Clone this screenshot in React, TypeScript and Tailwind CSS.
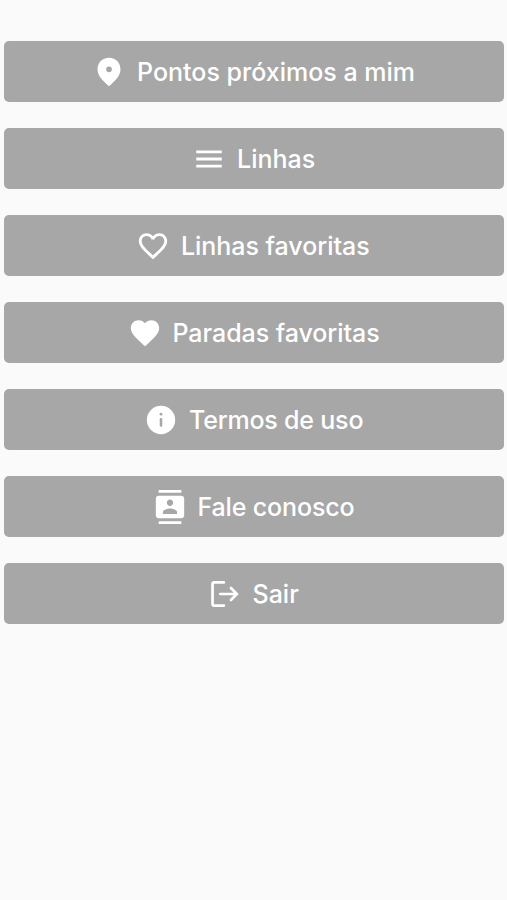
import React from "react";
import {
  MdContacts,
  MdFavorite,
  MdFavoriteBorder,
  MdMenu,
} from "react-icons/md";

type IconProps = {
  className?: string;
};

const PinIcon = ({ className }: IconProps) => (
  <svg viewBox="0 0 24 24" fill="currentColor" className={className}>
    <path
      fillRule="evenodd"
      d="M12 2C7.2 2 3.9 5.5 3.9 10.2C3.9 14.2 7 17.6 12 22C17 17.6 20.1 14.2 20.1 10.2C20.1 5.5 16.8 2 12 2ZM12 8.1A2 2 0 1 1 12 12.1A2 2 0 0 1 12 8.1Z"
    />
  </svg>
);

const InfoIcon = ({ className }: IconProps) => (
  <svg viewBox="0 0 24 24" fill="currentColor" className={className}>
    <circle cx="12" cy="12" r="10" />
    <circle cx="12" cy="7.9" r="1" className="fill-[#a7a7a7]" />
    <rect x="11.1" y="10.6" width="1.8" height="6.1" rx="0.9" className="fill-[#a7a7a7]" />
  </svg>
);

const ExitIcon = ({ className }: IconProps) => (
  <svg
    viewBox="0 0 24 24"
    fill="none"
    stroke="currentColor"
    strokeWidth="1.9"
    className={className}
  >
    <path
      strokeLinecap="round"
      strokeLinejoin="round"
      d="M11.2 3.8H4.3Q3.2 3.8 3.2 4.9V19.1Q3.2 20.2 4.3 20.2H11.2"
    />
    <path d="M8.6 12H20.5M16.2 7.8L20.4 12L16.2 16.2" strokeLinecap="round" />
  </svg>
);

const items = [
  { label: "Pontos próximos a mim", icon: PinIcon, text: "w-[278px]" },
  { label: "Linhas", icon: MdMenu, text: "w-[78px]" },
  { label: "Linhas favoritas", icon: MdFavoriteBorder, text: "w-[190px] tracking-[-0.04px]" },
  { label: "Paradas favoritas", icon: MdFavorite, text: "w-[207px] tracking-[-0.06px]" },
  { label: "Termos de uso", icon: InfoIcon, text: "w-[174px] tracking-[-0.2px]" },
  { label: "Fale conosco", icon: MdContacts, text: "w-[157px] tracking-[-0.14px]" },
  { label: "Sair", icon: ExitIcon, text: "w-[47px]" },
];

export default function App() {
  return (
    <main className="flex min-h-[900px] flex-col gap-[26px] bg-[#fafafa] pt-[41px] pr-[3px] pl-1 font-['Inter',sans-serif]">
      {items.map((item) => {
        const Icon = item.icon;

        return (
          <button
            key={item.label}
            type="button"
            className="flex h-[61px] w-full items-center justify-center gap-[11px] rounded-[5px] bg-[#a7a7a7] pr-px text-[25px] font-medium text-white"
          >
            <Icon className="h-[34px] w-[34px] shrink-0" />
            <span className={`pt-0.5 text-left whitespace-nowrap ${item.text}`}>{item.label}</span>
          </button>
        );
      })}
    </main>
  );
}
